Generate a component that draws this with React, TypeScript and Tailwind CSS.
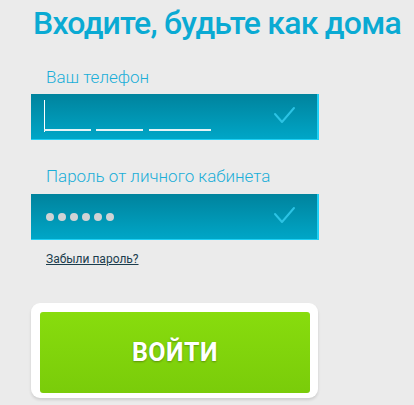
import React from 'react';

const Check = () => (
  <svg width="24" height="22" viewBox="0 0 24 22" className="absolute right-[20px] top-[12px]">
    <path d="M2 8 L9 16 L21 2" fill="none" stroke="#2cc3e4" strokeWidth="2" strokeLinecap="round" strokeLinejoin="round" />
  </svg>
);

const Field: React.FC<{ children: React.ReactNode }> = ({ children }) => (
  <div className="relative h-[46px] w-[288px] bg-gradient-to-b from-[#00839d] to-[#00a6c7] border-r-2 border-b border-[#1fd0f5]">
    {children}
    <Check />
  </div>
);

export default function App() {
  return (
    <div className="min-h-[405px] w-[414px] bg-[#ebebeb] overflow-hidden" style={{ fontFamily: 'Roboto, "Noto Sans", sans-serif' }}>
      <h1 className="pl-[33px] pt-[3px] text-[32px] leading-[40px] font-medium text-[#0aaad3] tracking-[-0.75px]">
        Входите, будьте как дома
      </h1>

      <div className="pl-[31px] mt-[22px]">
        <div className="pl-[15px] text-[17px] leading-[24px] font-light text-[#1aaed8]">Ваш телефон</div>
        <div className="mt-[5px]">
          <Field>
            <div className="absolute left-[13px] top-[6px] w-px h-[32px] bg-white" />
            <div className="absolute left-[13px] top-[35px] flex">
              <div className="w-[47px] h-[2px] bg-[#e6f3f6]" />
              <div className="ml-[5px] w-[47px] h-[2px] bg-[#e6f3f6]" />
              <div className="ml-[6px] w-[62px] h-[2px] bg-[#e6f3f6]" />
            </div>
          </Field>
        </div>

        <div className="pl-[15px] mt-[24px] text-[17px] leading-[24px] font-light text-[#1aaed8]">Пароль от личного кабинета</div>
        <div className="mt-[6px]">
          <Field>
            <div className="absolute left-[15px] top-[19px] flex gap-[4px]">
              {[0, 1, 2, 3, 4, 5].map(i => (
                <div key={i} className="w-[8px] h-[8px] rounded-full bg-[#cfd3d5]" />
              ))}
            </div>
          </Field>
        </div>

        <a href="#" className="block ml-[15px] mt-[11px] text-[12px] leading-[16px] text-[#1b3d4d] underline">
          Забыли пароль?
        </a>

        <div className="mt-[36px] w-[287px] rounded-[9px] bg-white pt-[9px] pl-[9px] pr-[8px] pb-[5px] shadow-[0_2px_3px_rgba(0,0,0,0.12)]">
          <button className="w-[270px] h-[81px] rounded-[3px] bg-gradient-to-b from-[#88dc0d] to-[#7acc0a] text-white text-[25px] font-bold tracking-[0.5px] [text-shadow:0_1px_2px_rgba(0,0,0,0.3)]">
            ВОЙТИ
          </button>
        </div>
      </div>
    </div>
  );
}
